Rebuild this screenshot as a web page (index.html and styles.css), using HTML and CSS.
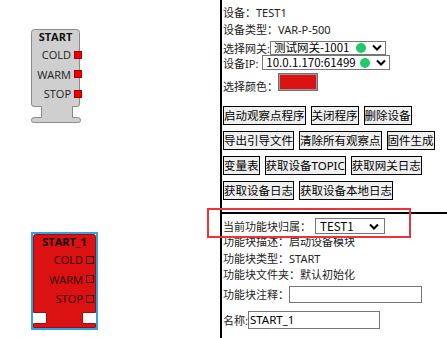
FILE: index.html
```html
<!DOCTYPE html>
<html lang="zh-CN">
<head>
<meta charset="utf-8">
<title>设备</title>
<link rel="stylesheet" href="styles.css">
</head>
<body>
<div class="app">
  <div class="canvas">
    <div class="node node-grey">
      <svg class="node-shape" width="52" height="95" viewBox="0 0 52 95">
        <path d="M3.5 0.5 H45.5 Q48.5 0.5 48.5 3.5 V75 Q48.5 77.5 46 77.5 H41.5 V88.5 H46.5 Q49.5 88.5 49.5 91 V91.5 Q49.5 93.5 47.5 93.5 H2.5 Q0.5 93.5 0.5 91.5 V91 Q0.5 88.5 3 88.5 H10.5 V77.5 H3 Q0.5 77.5 0.5 75 V3.5 Q0.5 0.5 3.5 0.5 Z" fill="#cfcfcf" stroke="#8a8a8a" stroke-width="1"/>
      </svg>
      <div class="node-title">START</div>
      <div class="port-row"><span>COLD</span><i class="port"></i></div>
      <div class="port-row"><span>WARM</span><i class="port"></i></div>
      <div class="port-row"><span>STOP</span><i class="port"></i></div>
    </div>

    <div class="node node-red">
      <svg class="node-shape" width="63" height="94" viewBox="0 0 63 94">
        <path d="M2.5 0.5 H60.5 Q62.5 0.5 62.5 2.5 V78.5 H49.5 V89.5 H62.5 V93.5 H0.5 V89.5 H13.5 V78.5 H0.5 V2.5 Q0.5 0.5 2.5 0.5 Z" fill="#dc1111" stroke="#9a1010" stroke-width="1"/>
      </svg>
      <div class="node-title">START_1</div>
      <div class="port-row"><span>COLD</span><i class="port"></i></div>
      <div class="port-row"><span>WARM</span><i class="port"></i></div>
      <div class="port-row"><span>STOP</span><i class="port"></i></div>
    </div>
  </div>

  <div class="panel">
    <div class="device">
      <div class="line">设备：TEST1</div>
      <div class="line">设备类型：VAR-P-500</div>
      <div class="field f-gw">
        <span>选择网关:</span>
        <div class="fsel sel-gw"><span class="fsel-text">测试网关-1001</span><i class="dot"></i><svg class="chev" width="10" height="7" viewBox="0 0 10 7"><path d="M1 1.5 L5 5.5 L9 1.5" fill="none" stroke="#000" stroke-width="2"/></svg></div>
      </div>
      <div class="field f-ip">
        <span>设备IP:</span>
        <div class="fsel sel-ip"><span class="fsel-text">10.0.1.170:61499</span><i class="dot"></i><svg class="chev" width="10" height="7" viewBox="0 0 10 7"><path d="M1 1.5 L5 5.5 L9 1.5" fill="none" stroke="#000" stroke-width="2"/></svg></div>
      </div>
      <div class="field f-color">
        <span>选择颜色：</span><span class="swatch"></span>
      </div>
      <div class="btns">
        <div class="btn-row"><span class="btn">启动观察点程序</span><span class="btn">关闭程序</span><span class="btn">删除设备</span></div>
        <div class="btn-row"><span class="btn">导出引导文件</span><span class="btn">清除所有观察点</span><span class="btn">固件生成</span></div>
        <div class="btn-row"><span class="btn">变量表</span><span class="btn">获取设备TOPIC</span><span class="btn">获取网关日志</span></div>
        <div class="btn-row"><span class="btn">获取设备日志</span><span class="btn">获取设备本地日志</span></div>
      </div>
    </div>

    <div class="blockinfo">
      <div class="highlight"></div>
      <div class="field f-owner">
        <span>当前功能块归属：</span>
        <div class="fsel sel-owner"><span class="fsel-text">TEST1</span><svg class="chev" width="10" height="7" viewBox="0 0 10 7"><path d="M1 1.5 L5 5.5 L9 1.5" fill="none" stroke="#000" stroke-width="2"/></svg></div>
      </div>
      <div class="bline">功能块描述：启动设备模块</div>
      <div class="bline">功能块类型：START</div>
      <div class="bline">功能块文件夹：默认初始化</div>
      <div class="field f-note">
        <span>功能块注释：</span><span class="input note-input"></span>
      </div>
      <div class="field f-name">
        <span>名称:</span><span class="input name-input">START_1</span>
      </div>
    </div>
  </div>
</div>
</body>
</html>
```

FILE: styles.css
```css
* { box-sizing: border-box; }
html, body {
  margin: 0;
  padding: 0;
  background: #fff;
  width: 447px;
  height: 338px;
  overflow: hidden;
}
body {
  font-family: "Noto Sans", "Noto Sans CJK SC", sans-serif;
  font-size: 11px;
  color: #222;
}
.app {
  display: flex;
  height: 338px;
}

/* ---------- canvas with nodes ---------- */
.canvas {
  position: relative;
  width: 220px;
  flex: none;
  height: 338px;
}
.node {
  position: absolute;
  font-family: "Open Sans", "Noto Sans", sans-serif;
  font-size: 11px;
}
.node-shape {
  position: absolute;
  left: 0;
  top: 0;
}
.node-title,
.port-row {
  position: relative;
}
.node-title {
  font-weight: 700;
  text-align: center;
  height: 16px;
  line-height: 16px;
  color: #111;
}
.port-row {
  display: flex;
  justify-content: flex-end;
  align-items: center;
  height: 19.5px;
}
.port-row span {
  margin-right: 3px;
}

.node-grey {
  left: 31px;
  top: 29px;
  width: 52px;
  height: 95px;
}
.node-grey .node-title {
  width: 49px;
}
.node-grey .port-row {
  width: 51px;
  color: #222;
}
.node-grey .port {
  width: 8px;
  height: 8px;
  background: #ee0000;
  border: 1px solid #a00000;
}

.node-red {
  left: 31px;
  top: 232px;
  width: 67px;
  height: 98px;
  border: 2px solid #2fa4e0;
}
.node-red .node-title {
  width: 63px;
  color: #0a0000;
}
.node-red .port-row {
  width: 61px;
  color: #2a0505;
}
.node-red .port {
  width: 8px;
  height: 8px;
  border: 1px solid #3a0000;
}

/* ---------- right panel ---------- */
.panel {
  flex: 1;
  border-left: 2px solid #000;
  display: flex;
  flex-direction: column;
}
.device {
  padding: 4px 0 12px 1px;
}
.line {
  height: 17px;
  line-height: 17px;
  white-space: nowrap;
}
.field {
  display: flex;
  align-items: center;
  white-space: nowrap;
}
.f-gw {
  margin-top: 2px;
  height: 15px;
}
.f-ip {
  height: 15px;
}
.fsel {
  display: flex;
  align-items: center;
  border: 1px solid #767676;
  background: #fff;
  font-family: "Noto Sans CJK SC", sans-serif;
  font-size: 11.5px;
  color: #000;
  padding: 0 2px 0 3px;
}
.fsel-text {
  line-height: 13px;
}
.sel-gw {
  width: 116px;
  height: 14px;
}
.sel-ip {
  width: 128px;
  height: 15px;
  margin-left: 4px;
}
.dot {
  width: 10px;
  height: 10px;
  border-radius: 50%;
  background: #1fcb68;
  margin-left: auto;
}
.chev {
  margin-left: 6px;
  margin-right: 1px;
}
.f-color {
  align-items: baseline;
  margin-top: 3px;
}
.swatch {
  display: inline-block;
  width: 40px;
  height: 18px;
  background: #dc1111;
  border: 1px solid #707070;
  box-shadow: inset 0 0 0 1px #9a9a9a;
}
.btns {
  margin-top: 12px;
  display: flex;
  flex-direction: column;
  gap: 6px;
}
.btn-row {
  display: flex;
  gap: 5px;
}
.btn {
  height: 19px;
  line-height: 17px;
  font-size: 11.5px;
  border: 1px solid #000;
  background: #efefef;
  color: #000;
  padding: 0;
  white-space: nowrap;
}

/* ---------- block info ---------- */
.blockinfo {
  position: relative;
  border-top: 2px solid #000;
  padding: 4px 0 0 1px;
}
.highlight {
  position: absolute;
  left: -15px;
  top: -6px;
  width: 204px;
  height: 30px;
  border: 2px solid #e8343a;
}
.f-owner {
  height: 16px;
}
.sel-owner {
  width: 70px;
  height: 16px;
  padding-left: 4px;
  justify-content: space-between;
  margin-left: 4px;
}
.sel-owner .chev {
  margin-right: 3px;
}
.bline {
  height: 16.5px;
  line-height: 16.5px;
  white-space: nowrap;
}
.f-note {
  margin-top: 2px;
  height: 17px;
}
.input {
  display: inline-block;
  border: 1px solid #767676;
  background: #fff;
  font-size: 11.5px;
  color: #000;
}
.note-input {
  width: 133px;
  height: 17px;
}
.f-name {
  margin-top: 8px;
  height: 18px;
}
.name-input {
  width: 132px;
  height: 18px;
  line-height: 16px;
  padding-left: 1px;
}
```
